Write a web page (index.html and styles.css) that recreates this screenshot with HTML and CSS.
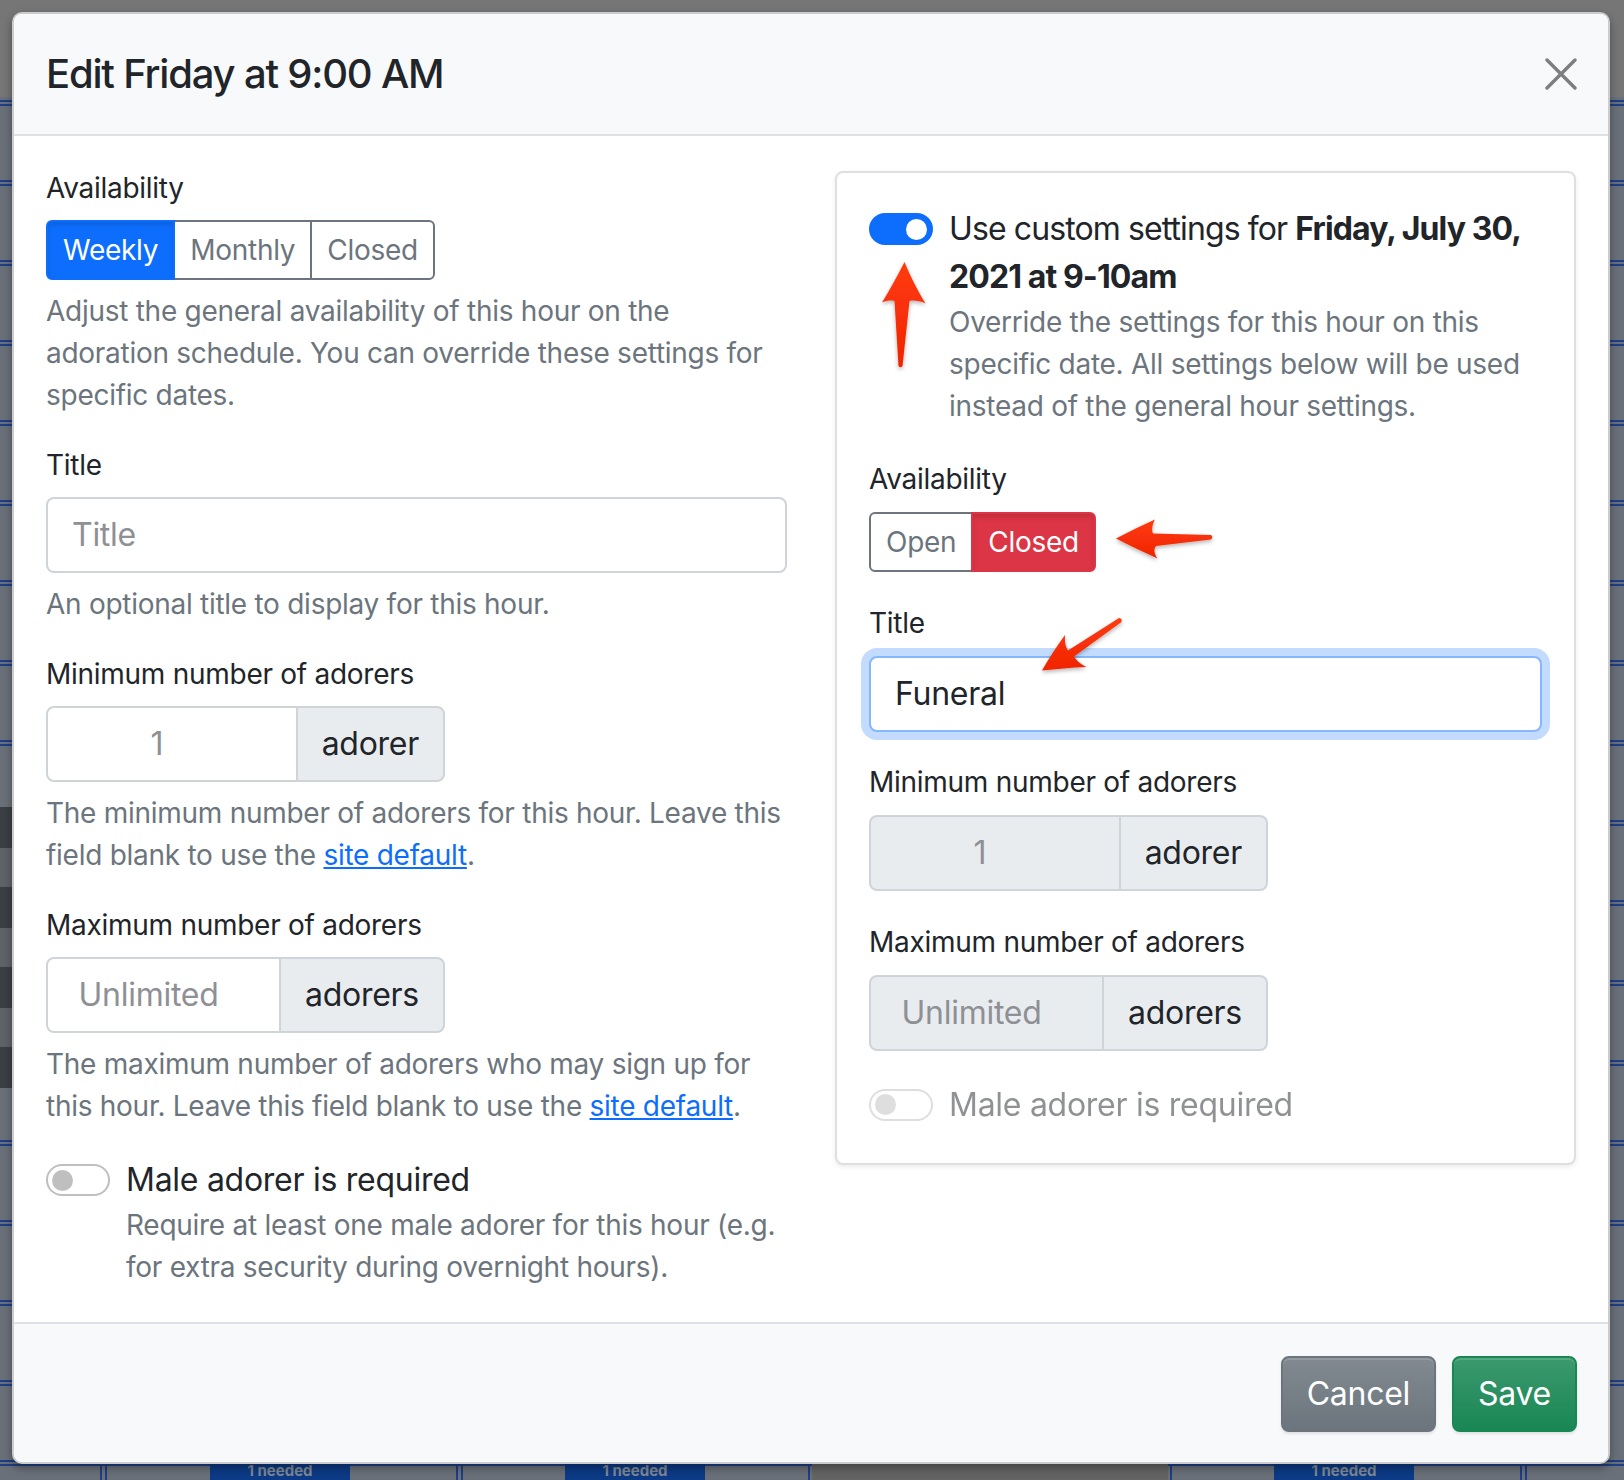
FILE: index.html
```html
<!DOCTYPE html>
<html lang="en">
<head>
<meta charset="utf-8">
<title>Edit Friday at 9:00 AM</title>
<link rel="stylesheet" href="styles.css">
</head>
<body>
<div class="backdrop">
  <div class="bd-band"></div>
  <div class="bd-blocks"></div>
  <div class="bd-vline" style="left:100px"></div>
  <div class="bd-vline" style="left:105px"></div>
  <div class="bd-vline" style="left:456px"></div>
  <div class="bd-vline" style="left:461px"></div>
  <div class="bd-vline" style="left:808px"></div>
  <div class="bd-vline" style="left:1170px"></div>
  <div class="bd-vline" style="left:1520px"></div>
  <div class="bd-vline" style="left:1525px"></div>
  <div class="bd-grey"></div>
  <div class="bd-badge" style="left:210px">1 needed</div>
  <div class="bd-badge" style="left:565px">1 needed</div>
  <div class="bd-badge" style="left:1274px">1 needed</div>
</div>

<div class="modal">
  <div class="modal-header">
    <h5 class="modal-title">Edit Friday at 9:00 AM</h5>
    <button class="btn-close" type="button" aria-label="Close">
      <svg viewBox="0 0 32 32" width="32" height="32"><path d="M2 2L30 30M30 2L2 30" stroke="#7d7e80" stroke-width="3.4" stroke-linecap="round" fill="none"/></svg>
    </button>
  </div>

  <div class="modal-body">
    <div class="row">
      <div class="col">
        <div class="field">
          <label class="label">Availability</label>
          <div class="btn-group">
            <button class="btn btn-sm btn-primary active">Weekly</button>
            <button class="btn btn-sm btn-outline">Monthly</button>
            <button class="btn btn-sm btn-outline">Closed</button>
          </div>
          <div class="help">Adjust the general availability of this hour on the adoration schedule. You can override these settings for specific dates.</div>
        </div>

        <div class="field">
          <label class="label">Title</label>
          <input class="form-control" type="text" placeholder="Title">
          <div class="help">An optional title to display for this hour.</div>
        </div>

        <div class="field">
          <label class="label">Minimum number of adorers</label>
          <div class="input-group">
            <input class="form-control num" type="text" placeholder="1">
            <span class="addon">adorer</span>
          </div>
          <div class="help">The minimum number of adorers for this hour. Leave this field blank to use the <a href="#">site default</a>.</div>
        </div>

        <div class="field">
          <label class="label">Maximum number of adorers</label>
          <div class="input-group">
            <input class="form-control num" type="text" placeholder="Unlimited">
            <span class="addon">adorers</span>
          </div>
          <div class="help">The maximum number of adorers who may sign up for this hour. Leave this field blank to use the <a href="#">site default</a>.</div>
        </div>

        <div class="check last">
          <span class="switch"></span>
          <div class="check-body">
            <div class="check-label">Male adorer is required</div>
            <div class="help flush">Require at least one male adorer for this hour (e.g. for extra security during overnight hours).</div>
          </div>
        </div>
      </div>

      <div class="col">
        <div class="card">
          <div class="check field-lg">
            <span class="switch on"></span>
            <div class="check-body">
              <div class="check-label tight">Use custom settings for <strong>Friday, July 30, 2021 at 9-10am</strong></div>
              <div class="help flush">Override the settings for this hour on this specific date. All settings below will be used instead of the general hour settings.</div>
            </div>
          </div>

          <div class="field">
            <label class="label">Availability</label>
            <div class="btn-group">
              <button class="btn btn-sm btn-outline">Open</button>
              <button class="btn btn-sm btn-danger active">Closed</button>
            </div>
          </div>

          <div class="field">
            <label class="label">Title</label>
            <input class="form-control focus" type="text" value="Funeral">
          </div>

          <div class="field">
            <label class="label">Minimum number of adorers</label>
            <div class="input-group">
              <input class="form-control num" type="text" placeholder="1" disabled>
              <span class="addon">adorer</span>
            </div>
          </div>

          <div class="field">
            <label class="label">Maximum number of adorers</label>
            <div class="input-group">
              <input class="form-control num" type="text" placeholder="Unlimited" disabled>
              <span class="addon">adorers</span>
            </div>
          </div>

          <div class="check last disabled">
            <span class="switch"></span>
            <div class="check-body">
              <div class="check-label">Male adorer is required</div>
            </div>
          </div>
        </div>
      </div>
    </div>
  </div>

  <div class="modal-footer">
    <button class="btn btn-secondary">Cancel</button>
    <button class="btn btn-success">Save</button>
  </div>
</div>

<svg class="annotations" width="1624" height="1480" viewBox="0 0 1624 1480">
  <defs>
    <filter id="sh" x="-20%" y="-20%" width="140%" height="140%">
      <feDropShadow dx="0" dy="2" stdDeviation="2" flood-color="#000" flood-opacity="0.3"/>
    </filter>
    <linearGradient id="red" x1="0" y1="0" x2="0" y2="1">
      <stop offset="0" stop-color="#ff3b10"/>
      <stop offset="1" stop-color="#f02400"/>
    </linearGradient>
  </defs>
  <g fill="url(#red)" filter="url(#sh)">
    <!-- up arrow -->
    <path d="M904.5 262 C911 278 918 291 925.5 303.5 C919 300.5 913 300 909.5 301 L902.5 366 Q900.5 368.5 898.5 366 L894.5 301 C891 300 887 300.5 882 302.5 C889 291 897 277 904.5 262 Z"/>
    <!-- left arrow -->
    <path d="M1116 538.5 C1130 531 1143 525 1155 519.5 C1152 525 1151.5 530 1153 533.5 L1211 535 Q1213.5 537 1211 539.5 L1156 546 C1153.5 549 1154 553.5 1157.5 558.5 C1143 552 1130 545.5 1116 538.5 Z"/>
    <!-- diagonal arrow -->
    <path d="M1042 670.5 C1049 658 1057 646 1065 635 C1064.5 642 1065.5 647 1068 650.5 L1119 618 Q1122.5 618.5 1121.5 622 L1074 656.5 C1076.5 660.5 1080.5 664 1086.5 667 C1071 667.5 1056 669 1042 670.5 Z"/>
  </g>
</svg>
</body>
</html>
```

FILE: styles.css
```css
* { box-sizing: border-box; }

html, body {
  margin: 0;
  padding: 0;
}

body {
  position: relative;
  width: 1624px;
  height: 1480px;
  overflow: hidden;
  font-family: Inter, "Liberation Sans", "DejaVu Sans", sans-serif;
  letter-spacing: -0.017em;
  color: #212529;
  background: #6a7079;
}

/* ---------- dimmed page behind the modal ---------- */
.backdrop {
  position: absolute;
  inset: 0;
  z-index: 0;
  background-color: #6a7079;
  background-image: linear-gradient(to bottom,
      #1e3f86 0 2px, transparent 2px 4px, #1e3f86 4px 6px, transparent 6px);
  background-size: 100% 80px;
  background-position: 0 100px;
  background-repeat: repeat-y;
}
.bd-band {
  position: absolute;
  left: 0; top: 0;
  width: 100%;
  height: 97px;
  background: #767676;
}
.bd-blocks {
  position: absolute;
  left: 0; top: 807px;
  width: 40px;
  height: 281px;
  background: repeating-linear-gradient(to bottom, #3b3e43 0 41px, #5f6267 41px 80px);
}
.bd-vline {
  position: absolute;
  top: 1420px;
  width: 2px;
  height: 60px;
  background: #1e3f86;
}
.bd-grey {
  position: absolute;
  left: 812px; top: 1440px;
  width: 356px; height: 40px;
  background: #646464;
}
.bd-badge {
  position: absolute;
  top: 1462px;
  width: 140px;
  height: 18px;
  background: #0c3a86;
  color: #7f8893;
  font-size: 15px;
  font-weight: 700;
  line-height: 18px;
  text-align: center;
  letter-spacing: 0;
}

/* ---------- modal ---------- */
.modal {
  position: relative;
  z-index: 1;
  margin: 12px 0 0 12px;
  width: 1598px;
  background: #fff;
  border: 2px solid rgba(0, 0, 0, 0.2);
  border-radius: 10px;
  box-shadow: 0 4px 10px rgba(0, 0, 0, 0.35);
  overflow: hidden;
}

.modal-header {
  display: flex;
  align-items: center;
  justify-content: space-between;
  padding: 30px 31px 30px 32px;
  background: #f8f9fa;
  border-bottom: 2px solid #dee2e6;
}
.modal-title {
  margin: 0;
  font-size: 40px;
  line-height: 60px;
  font-weight: 500;
  letter-spacing: -0.03em;
}
.btn-close {
  width: 32px;
  height: 32px;
  padding: 0;
  border: 0;
  background: none;
  display: block;
}
.btn-close svg { display: block; }

.modal-body {
  padding: 31px 32px 34px;
}
.row {
  display: grid;
  grid-template-columns: 1fr 1fr;
  column-gap: 48px;
  align-items: start;
}

/* ---------- form bits ---------- */
.field { margin-bottom: 29px; }
.col > .field + .field { margin-top: -1px; }
.field-lg { margin-bottom: 31px; }

.label {
  display: block;
  font-size: 28px;
  line-height: 42px;
  margin-bottom: 11px;
}
.help {
  margin-top: 10px;
  font-size: 28px;
  line-height: 42px;
  color: #6c757d;
}
.help.flush { margin-top: 0; }
.help a { color: #0d6efd; text-decoration: underline; }

.btn-group { display: inline-flex; }
.btn {
  font-family: inherit;
  letter-spacing: inherit;
  border: 2px solid transparent;
  font-weight: 400;
  cursor: pointer;
}
.btn-sm {
  font-size: 28px;
  line-height: 42px;
  padding: 7px 15px;
}
.btn-group .btn + .btn { margin-left: -2px; }
.btn-group .btn:first-child { border-radius: 6px 0 0 6px; }
.btn-group .btn:last-child { border-radius: 0 6px 6px 0; }

.btn-outline {
  color: #6c757d;
  background: #fff;
  border-color: #6c757d;
}
.btn-primary {
  color: #fff;
  background: #0d6efd;
  border-color: #0d6efd;
}
.btn-danger {
  color: #fff;
  background: #dc3545;
  border-color: #dc3545;
}
.btn.active {
  position: relative;
  z-index: 1;
  box-shadow: inset 0 3px 5px rgba(0, 0, 0, 0.125);
}

.form-control {
  display: block;
  width: 100%;
  font-family: inherit;
  letter-spacing: inherit;
  font-size: 32px;
  line-height: 48px;
  padding: 12px 24px;
  color: #212529;
  background: #fff;
  border: 2px solid #ced4da;
  border-radius: 8px;
  outline: none;
}
.form-control::placeholder { color: #8e9095; opacity: 1; }
.form-control:disabled { background: #e9ecef; }
.form-control.focus {
  border-color: #86b7fe;
  box-shadow: 0 0 0 8px rgba(13, 110, 253, 0.25);
}

.input-group {
  display: flex;
  width: 399px;
}
.input-group .form-control {
  flex: 1 1 auto;
  min-width: 0;
  width: auto;
  border-radius: 8px 0 0 8px;
}
.form-control.num {
  text-align: center;
  padding-left: 24px;
  padding-right: 54px;
}
.addon {
  display: flex;
  align-items: center;
  margin-left: -2px;
  padding: 12px 24px;
  font-size: 32px;
  line-height: 48px;
  color: #212529;
  background: #e9ecef;
  border: 2px solid #ced4da;
  border-radius: 0 8px 8px 0;
  white-space: nowrap;
}

/* switches */
.check {
  display: grid;
  grid-template-columns: 80px 1fr;
  align-items: start;
}
.check.last { margin-bottom: 0; }
.col > .check.last { margin-top: 10px; }
.check.disabled { opacity: 0.5; }
.switch {
  position: relative;
  display: block;
  width: 64px;
  height: 32px;
  margin-top: 8px;
  border: 2px solid rgba(0, 0, 0, 0.25);
  border-radius: 32px;
  background: #fff;
}
.switch::after {
  content: "";
  position: absolute;
  top: 3.5px;
  left: 4px;
  width: 21px;
  height: 21px;
  border-radius: 50%;
  background: rgba(0, 0, 0, 0.25);
}
.switch.on {
  background: #0d6efd;
  border-color: #0d6efd;
}
.switch.on::after {
  left: auto;
  right: 4px;
  background: #fff;
}
.check-label {
  font-size: 32px;
  line-height: 48px;
}
.check-label.tight { letter-spacing: -0.028em; }
.check-label strong { font-weight: 700; }

.card {
  margin-top: 4px;
  padding: 32px 32px 34px;
  border: 2px solid rgba(0, 0, 0, 0.125);
  border-radius: 8px;
  box-shadow: 0 2px 5px rgba(0, 0, 0, 0.08);
}
.card .field { margin-bottom: 29.5px; }
.card .label { margin-bottom: 12px; }
.card .check.last { margin-top: 30px; }

/* ---------- footer ---------- */
.modal-footer {
  display: flex;
  justify-content: flex-end;
  gap: 16px;
  padding: 32px 31px 30px;
  background: #f8f9fa;
  border-top: 2px solid #dee2e6;
}
.modal-footer .btn {
  font-size: 32px;
  line-height: 48px;
  padding: 12px 24px;
  border-radius: 8px;
  color: #fff;
  background-image: linear-gradient(180deg, rgba(255, 255, 255, 0.15), rgba(255, 255, 255, 0));
  box-shadow: inset 0 2px 0 rgba(255, 255, 255, 0.15), 0 2px 3px rgba(0, 0, 0, 0.1);
}
.btn-secondary { background-color: #6c757d; border-color: #6c757d; }
.btn-success { background-color: #198754; border-color: #198754; }

/* ---------- annotation arrows ---------- */
.annotations {
  position: absolute;
  left: 0;
  top: 0;
  z-index: 2;
  pointer-events: none;
}
```
